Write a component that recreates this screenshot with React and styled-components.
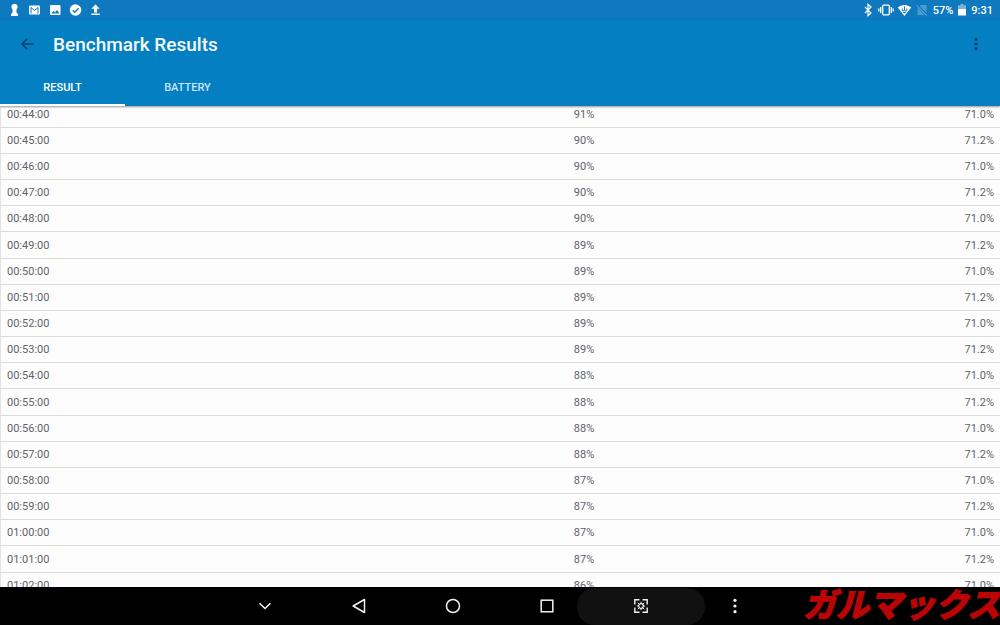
import { useState } from "react";
import styled, { createGlobalStyle } from "styled-components";

const GlobalStyle = createGlobalStyle`
  * {
    box-sizing: border-box;
  }

  body {
    margin: 0;
    font-family: Roboto, "Noto Sans CJK JP", sans-serif;
    background-color: #000;
  }

  button {
    border: 0;
    padding: 0;
    background: none;
    font-family: inherit;
    cursor: pointer;
  }

  svg {
    display: block;
    flex: none;
  }
`;

const Screen = styled.div`
  display: flex;
  flex-direction: column;
  height: 100vh;
  overflow: hidden;
`;

const StatusBar = styled.div`
  display: flex;
  flex: none;
  justify-content: space-between;
  align-items: center;
  height: 20px;
  padding: 0 7px 0 8px;
  background-color: #0e79bf;
  color: #fff;
  font-size: 11px;
  font-weight: 500;
`;

const StatusGroup = styled.div`
  display: flex;
  align-items: center;
  gap: ${({ $gap }) => $gap}px;
`;

const Header = styled.header`
  position: relative;
  z-index: 1;
  flex: none;
  background-color: #047fc1;
  box-shadow: 0 1px 2px rgba(0, 0, 0, 0.4);
`;

const Toolbar = styled.div`
  display: flex;
  align-items: center;
  height: 48px;
  padding: 0 16px 0 20px;
`;

const Title = styled.h1`
  flex: 1;
  margin: 0 0 0 17px;
  color: #f4faff;
  font-size: 19px;
  font-weight: 500;
`;

const IconButton = styled.button`
  display: flex;
  color: #08416b;
`;

const Tabs = styled.div`
  display: flex;
`;

const Tab = styled.button`
  width: 125px;
  height: 38px;
  padding-top: 2px;
  border-bottom: 2px solid ${({ $active }) => ($active ? "#fff" : "transparent")};
  color: ${({ $active }) => ($active ? "#fff" : "#cde6f5")};
  font-size: 11px;
  font-weight: 500;
  text-transform: uppercase;
`;

const Content = styled.main`
  flex: 1;
  min-height: 0;
  overflow: hidden;
  background-color: #fdfdfd;
`;

const ResultTable = styled.table`
  width: 100%;
  height: 497px;
  margin-top: -4px;
  border-collapse: collapse;
  border-left: 1px solid #e4e4e4;
  table-layout: fixed;
  color: #5d636b;
  font-size: 11px;
`;

const Cell = styled.td`
  width: ${({ $width }) => $width};
  padding: 0 6px;
  border-bottom: 1px solid #dcdcdc;
  text-align: ${({ $align }) => $align || "left"};
`;

const NavBar = styled.nav`
  position: relative;
  display: grid;
  flex: none;
  grid-template-columns: repeat(6, 94px);
  justify-content: center;
  height: 38px;
  background-color: #000;
`;

const NavButton = styled.button`
  position: relative;
  display: flex;
  justify-content: center;
  align-items: center;
  color: #f2f2f2;

  svg {
    position: relative;
  }
`;

const Pill = styled.span`
  position: absolute;
  inset: 1px -17px 0;
  border-radius: 18px;
  background-color: #111;
`;

const Watermark = styled.span`
  position: absolute;
  right: 0;
  top: 0;
  color: #b90505;
  font-family: "Noto Sans CJK JP", sans-serif;
  font-size: 33px;
  font-style: italic;
  font-weight: 900;
  line-height: 32px;
  white-space: nowrap;
  -webkit-text-stroke: 1px #b90505;
`;

const levels = [
  91, 90, 90, 90, 90, 89, 89, 89, 89, 89, 88, 88, 88, 88, 87, 87, 87, 87, 86,
];

const pad = (n) => String(n).padStart(2, "0");

const rows = levels.map((level, i) => {
  const minute = 44 + i;
  return {
    time: `${pad(Math.floor(minute / 60))}:${pad(minute % 60)}:00`,
    level: `${level}%`,
    load: i % 2 ? "71.2%" : "71.0%",
  };
});

function Notifications() {
  return (
    <StatusGroup $gap={7}>
      <svg width="13" height="14" viewBox="0 0 13 14" fill="#fff">
        <path d="M6.500 .8a3.200 3.200 0 0 1 2.200 5.500L8.300 8l.7 2.500h1V13H3v-2.500h1L4.700 8l-.4-1.700A3.200 3.200 0 0 1 6.500.8z" />
      </svg>
      <svg width="13" height="14" viewBox="0 0 13 14">
        <rect x="1" y="2.500" width="11" height="9" rx="1" fill="#fff" />
        <path d="M3 10.500V4.500l3.500 3 3.500-3v6" fill="none" stroke="#0e79bf" strokeWidth="1" />
      </svg>
      <svg width="14" height="14" viewBox="0 0 14 14">
        <rect x="2" y="2" width="10.500" height="10" rx="1" fill="#fff" />
        <path d="M3.500 10.500l2-2.800 1.500 1.800 2-2.500 2.500 3.500z" fill="#0e79bf" />
      </svg>
      <svg width="13" height="14" viewBox="0 0 13 14">
        <circle cx="6.500" cy="7" r="5.800" fill="#fff" />
        <path d="M3.800 7.200l2 2 3.800-4" fill="none" stroke="#0e79bf" strokeWidth="1.400" />
      </svg>
      <svg width="13" height="14" viewBox="0 0 13 14" fill="#fff">
        <path d="M6.500 1.500l4.200 4.200H8v3.800H5V5.700H2.300zM2.300 10.500h8.400V12H2.300z" />
      </svg>
    </StatusGroup>
  );
}

function SystemStatus() {
  return (
    <StatusGroup $gap={5}>
      <StatusGroup $gap={3}>
        <svg width="12" height="14" viewBox="0 0 12 14" fill="none" stroke="#fff" strokeWidth="1.200">
          <path d="M2 4l6 6-3 2.700V1.300L8 4l-6 6" />
        </svg>
        <svg width="16" height="14" viewBox="0 0 16 14" fill="none" stroke="#fff" strokeWidth="1.300">
          <rect x="4.700" y="2.200" width="6.600" height="9.600" rx="1" />
          <path d="M2.700 4v6M13.300 4v6M.8 5.500v3M15.200 5.500v3" />
        </svg>
        <svg width="15" height="14" viewBox="0 0 15 14">
          <path d="M.8 4.500C4.500 1 10.500 1 14.200 4.500L7.500 13z" fill="#fff" />
          <path d="M7.500 3.500v3.500M5.200 5.500v2.300h4.600V5.500M6.200 9.500h2.600" stroke="#0e79bf" fill="none" />
        </svg>
        <svg width="13" height="14" viewBox="0 0 13 14">
          <path d="M11.500 2v10H2.500V5.500L6 2z" fill="#4b9bd0" />
          <path d="M2 2l10 10.500" stroke="#0e79bf" strokeWidth="2.600" />
          <path d="M1.800 2.500l10 10" stroke="#78b4dc" strokeWidth="1" />
        </svg>
      </StatusGroup>
      <span>57%</span>
      <svg width="8" height="14" viewBox="0 0 8 14">
        <path d="M2.500 1h3v1.200H8V7H0V2.200h2.500z" fill="#78b4dc" />
        <path d="M0 6h8v6.500H0z" fill="#fff" />
      </svg>
      <span>9:31</span>
    </StatusGroup>
  );
}

function SystemNav() {
  return (
    <NavBar>
      <NavButton aria-label="Hide">
        <svg width="14" height="8" viewBox="0 0 14 8" fill="none" stroke="currentColor" strokeWidth="1.500">
          <path d="M1.500 1.200L7 6.500l5.500-5.300" />
        </svg>
      </NavButton>
      <NavButton aria-label="Back">
        <svg width="14" height="16" viewBox="0 0 14 16" fill="none" stroke="currentColor" strokeWidth="1.500" strokeLinejoin="round">
          <path d="M12.500 1.500v13L1.200 8z" />
        </svg>
      </NavButton>
      <NavButton aria-label="Home">
        <svg width="16" height="16" viewBox="0 0 16 16" fill="none" stroke="currentColor" strokeWidth="1.500">
          <circle cx="8" cy="8" r="6.500" />
        </svg>
      </NavButton>
      <NavButton aria-label="Recents">
        <svg width="14" height="14" viewBox="0 0 14 14" fill="none" stroke="currentColor" strokeWidth="1.500">
          <rect x="1.200" y="1.200" width="11.600" height="11.600" />
        </svg>
      </NavButton>
      <NavButton aria-label="Screenshot">
        <Pill />
        <svg width="14" height="14" viewBox="0 0 14 14" fill="none" stroke="currentColor" strokeWidth="1.400">
          <path d="M.8 5.500V.8h4.700M8.500 .8h4.700v4.700M13.200 8.500v4.700H8.500M5.500 13.200H.8V8.500" />
          <circle cx="7" cy="7" r="2.300" strokeWidth="1.200" />
          <path d="M7 2.800v2M7 9.200v2M2.800 7h2M9.200 7h2M3.800 3.800l1.500 1.500M10.200 3.800L8.700 5.300M3.800 10.200l1.500-1.500M10.200 10.200L8.700 8.700" strokeWidth="1" />
        </svg>
      </NavButton>
      <NavButton aria-label="More">
        <svg width="4" height="16" viewBox="0 0 4 16" fill="currentColor">
          <circle cx="2" cy="2.300" r="1.600" />
          <circle cx="2" cy="8" r="1.600" />
          <circle cx="2" cy="13.700" r="1.600" />
        </svg>
      </NavButton>
      <Watermark>ガルマックス</Watermark>
    </NavBar>
  );
}

function App() {
  const [tab, setTab] = useState("Result");

  return (
    <Screen>
      <GlobalStyle />
      <StatusBar>
        <Notifications />
        <SystemStatus />
      </StatusBar>
      <Header>
        <Toolbar>
          <IconButton aria-label="Go back">
            <svg width="16" height="14" viewBox="0 0 16 14" fill="none" stroke="currentColor" strokeWidth="1.500">
              <path d="M14 7H2.500M7.500 1.500L2 7l5.500 5.500" />
            </svg>
          </IconButton>
          <Title>Benchmark Results</Title>
          <IconButton aria-label="More options">
            <svg width="16" height="14" viewBox="0 0 16 14" fill="currentColor">
              <circle cx="8" cy="2.300" r="1.600" />
              <circle cx="8" cy="7" r="1.600" />
              <circle cx="8" cy="11.700" r="1.600" />
            </svg>
          </IconButton>
        </Toolbar>
        <Tabs role="tablist">
          {["Result", "Battery"].map((name) => (
            <Tab
              key={name}
              role="tab"
              aria-selected={tab === name}
              $active={tab === name}
              onClick={() => setTab(name)}
            >
              {name}
            </Tab>
          ))}
        </Tabs>
      </Header>
      <Content>
        <ResultTable>
          <tbody>
            {rows.map((row) => (
              <tr key={row.time}>
                <Cell $width="50%">{row.time}</Cell>
                <Cell $width="10%" $align="right">
                  {row.level}
                </Cell>
                <Cell $align="right">{row.load}</Cell>
              </tr>
            ))}
          </tbody>
        </ResultTable>
      </Content>
      <SystemNav />
    </Screen>
  );
}

export default App;
